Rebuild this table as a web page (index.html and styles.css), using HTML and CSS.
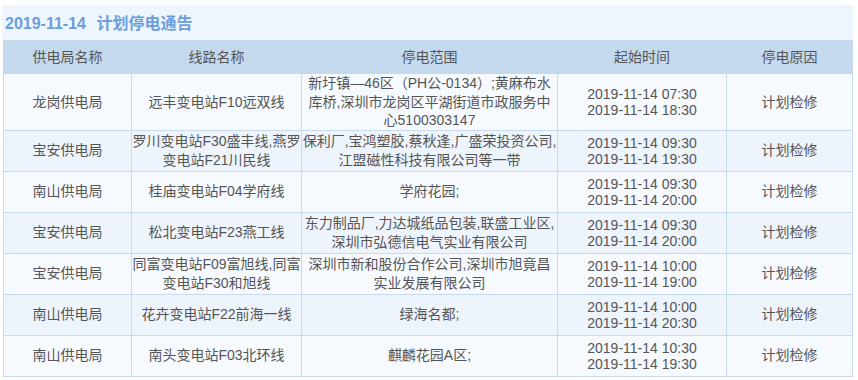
FILE: index.html
```html
<!DOCTYPE html>
<html lang="zh-CN">
<head>
  <meta charset="UTF-8">
  <title>计划停电通告</title>
  <link rel="stylesheet" href="styles.css">
</head>
<body>
  <!-- Bloc de l'avis de coupure -->
  <div class="notice">
    <h2 class="notice-title">2019-11-14 <span>计划停电通告</span></h2>

    <table class="outage">
      <colgroup>
        <col class="c-bureau">
        <col class="c-line">
        <col class="c-range">
        <col class="c-time">
        <col class="c-reason">
      </colgroup>
      <thead>
        <tr>
          <th>供电局名称</th>
          <th>线路名称</th>
          <th>停电范围</th>
          <th>起始时间</th>
          <th>停电原因</th>
        </tr>
      </thead>
      <tbody>
        <tr>
          <td>龙岗供电局</td>
          <td>远丰变电站F10远双线</td>
          <td>新圩镇—46区（PH公-0134）;黄麻布水库桥,深圳市龙岗区平湖街道市政服务中心5100303147</td>
          <td class="time"><div>2019-11-14 07:30</div><div>2019-11-14 18:30</div></td>
          <td>计划检修</td>
        </tr>
        <tr>
          <td>宝安供电局</td>
          <td>罗川变电站F30盛丰线,燕罗变电站F21川民线</td>
          <td>保利厂,宝鸿塑胶,蔡秋逢,广盛荣投资公司,江盟磁性科技有限公司等一带</td>
          <td class="time"><div>2019-11-14 09:30</div><div>2019-11-14 19:30</div></td>
          <td>计划检修</td>
        </tr>
        <tr>
          <td>南山供电局</td>
          <td>桂庙变电站F04学府线</td>
          <td>学府花园;</td>
          <td class="time"><div>2019-11-14 09:30</div><div>2019-11-14 20:00</div></td>
          <td>计划检修</td>
        </tr>
        <tr>
          <td>宝安供电局</td>
          <td>松北变电站F23燕工线</td>
          <td>东力制品厂,力达城纸品包装,联盛工业区,深圳市弘德信电气实业有限公司</td>
          <td class="time"><div>2019-11-14 09:30</div><div>2019-11-14 20:00</div></td>
          <td>计划检修</td>
        </tr>
        <tr>
          <td>宝安供电局</td>
          <td>同富变电站F09富旭线,同富变电站F30和旭线</td>
          <td>深圳市新和股份合作公司,深圳市旭竟昌实业发展有限公司</td>
          <td class="time"><div>2019-11-14 10:00</div><div>2019-11-14 19:00</div></td>
          <td>计划检修</td>
        </tr>
        <tr>
          <td>南山供电局</td>
          <td>花卉变电站F22前海一线</td>
          <td>绿海名都;</td>
          <td class="time"><div>2019-11-14 10:00</div><div>2019-11-14 20:30</div></td>
          <td>计划检修</td>
        </tr>
        <tr>
          <td>南山供电局</td>
          <td>南头变电站F03北环线</td>
          <td>麒麟花园A区;</td>
          <td class="time"><div>2019-11-14 10:30</div><div>2019-11-14 19:30</div></td>
          <td>计划检修</td>
        </tr>
      </tbody>
    </table>
  </div>
</body>
</html>
```

FILE: styles.css
```css
/* Page de base */
body {
  margin: 0;
  background: #fff;
  font-family: "Liberation Sans", "Noto Sans CJK SC", sans-serif;
  color: #555;
}

/* Conteneur de l'avis */
.notice {
  width: 851px;
  margin: 5px 0 0 2px;
}

/* Bandeau titre */
.notice-title {
  margin: 0;
  padding-left: 3px;
  height: 35px;
  line-height: 37px;
  font-size: 16px;
  font-weight: bold;
  color: #6b9edb;
  background: #eef5fd;
}

.notice-title span {
  margin-left: 6px;
}

/* Tableau des coupures */
.outage {
  width: 849px;
  margin-left: 1px;
  border-collapse: collapse;
  table-layout: fixed;
  font-size: 14px;
}

.c-bureau { width: 128px; }
.c-line   { width: 170px; }
.c-range  { width: 256px; }
.c-time   { width: 169px; }
.c-reason { width: 126px; }

.outage th {
  height: 32px;
  padding: 0;
  font-weight: normal;
  background: #c5d9ee;
  border: 1px solid #c5d9ee;
  line-height: 18px;
}

.outage td {
  height: 40px;
  padding: 0;
  text-align: center;
  line-height: 18.5px;
  border: 1px solid #c7daf0;
  background: #f6faff;
}

.outage tbody tr:nth-child(even) td {
  background: #eef4fc;
}

/* Dates : deux lignes plus serrées */
.outage td.time {
  line-height: 16px;
}
```
